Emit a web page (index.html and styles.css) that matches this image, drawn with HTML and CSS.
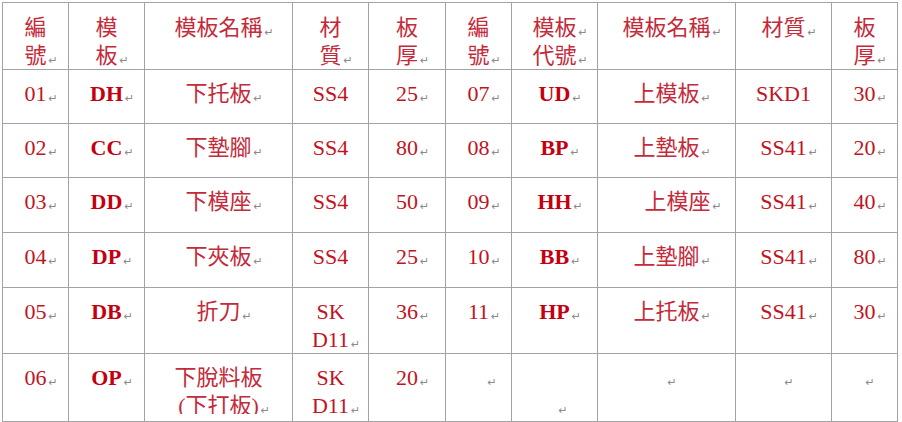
FILE: index.html
```html
<!DOCTYPE html>
<html lang="zh-Hant">
<head>
<meta charset="utf-8">
<title>模板表</title>
<link rel="stylesheet" href="styles.css">
</head>
<body>
<table class="grid">
  <colgroup>
    <col class="k1"><col class="k2"><col class="k3"><col class="k4"><col class="k5">
    <col class="k6"><col class="k7"><col class="k8"><col class="k9"><col class="k10">
  </colgroup>
  <tr class="rh">
    <td><div class="cell zh">編<br>號<span class="m">↵</span></div></td>
    <td><div class="cell zh">模<br>板<span class="m">↵</span></div></td>
    <td><div class="cell zh">模板名稱<span class="m">↵</span></div></td>
    <td><div class="cell zh">材<br>質<span class="m">↵</span></div></td>
    <td><div class="cell zh">板<br>厚<span class="m">↵</span></div></td>
    <td><div class="cell zh">編<br>號<span class="m">↵</span></div></td>
    <td><div class="cell zh">模板<span class="m">↵</span><br>代號<span class="m">↵</span></div></td>
    <td><div class="cell zh">模板名稱<span class="m">↵</span></div></td>
    <td><div class="cell zh">材質<span class="m">↵</span></div></td>
    <td><div class="cell zh">板<br>厚<span class="m">↵</span></div></td>
  </tr>
  <tr class="ra">
    <td><div class="cell">01<span class="m">↵</span></div></td>
    <td><div class="cell b">DH<span class="m">↵</span></div></td>
    <td><div class="cell zh">下托板<span class="m">↵</span></div></td>
    <td><div class="cell">SS4</div></td>
    <td><div class="cell">25<span class="m">↵</span></div></td>
    <td><div class="cell">07<span class="m">↵</span></div></td>
    <td><div class="cell b">UD<span class="m">↵</span></div></td>
    <td><div class="cell zh">上模板<span class="m">↵</span></div></td>
    <td><div class="cell">SKD1</div></td>
    <td><div class="cell">30<span class="m">↵</span></div></td>
  </tr>
  <tr class="ra">
    <td><div class="cell">02<span class="m">↵</span></div></td>
    <td><div class="cell b">CC<span class="m">↵</span></div></td>
    <td><div class="cell zh">下墊腳<span class="m">↵</span></div></td>
    <td><div class="cell">SS4</div></td>
    <td><div class="cell">80<span class="m">↵</span></div></td>
    <td><div class="cell">08<span class="m">↵</span></div></td>
    <td><div class="cell b">BP<span class="m">↵</span></div></td>
    <td><div class="cell zh">上墊板<span class="m">↵</span></div></td>
    <td><div class="cell">SS41<span class="m">↵</span></div></td>
    <td><div class="cell">20<span class="m">↵</span></div></td>
  </tr>
  <tr class="rb">
    <td><div class="cell">03<span class="m">↵</span></div></td>
    <td><div class="cell b">DD<span class="m">↵</span></div></td>
    <td><div class="cell zh">下模座<span class="m">↵</span></div></td>
    <td><div class="cell">SS4</div></td>
    <td><div class="cell">50<span class="m">↵</span></div></td>
    <td><div class="cell">09<span class="m">↵</span></div></td>
    <td><div class="cell b">HH<span class="m">↵</span></div></td>
    <td><div class="cell zh shift">上模座<span class="m">↵</span></div></td>
    <td><div class="cell">SS41<span class="m">↵</span></div></td>
    <td><div class="cell">40<span class="m">↵</span></div></td>
  </tr>
  <tr class="rb">
    <td><div class="cell">04<span class="m">↵</span></div></td>
    <td><div class="cell b">DP<span class="m">↵</span></div></td>
    <td><div class="cell zh">下夾板<span class="m">↵</span></div></td>
    <td><div class="cell">SS4</div></td>
    <td><div class="cell">25<span class="m">↵</span></div></td>
    <td><div class="cell">10<span class="m">↵</span></div></td>
    <td><div class="cell b">BB<span class="m">↵</span></div></td>
    <td><div class="cell zh">上墊腳<span class="m">↵</span></div></td>
    <td><div class="cell">SS41<span class="m">↵</span></div></td>
    <td><div class="cell">80<span class="m">↵</span></div></td>
  </tr>
  <tr class="rc">
    <td><div class="cell">05<span class="m">↵</span></div></td>
    <td><div class="cell b">DB<span class="m">↵</span></div></td>
    <td><div class="cell zh">折刀<span class="m">↵</span></div></td>
    <td><div class="cell">SK<br>D11<span class="m">↵</span></div></td>
    <td><div class="cell">36<span class="m">↵</span></div></td>
    <td><div class="cell">11<span class="m">↵</span></div></td>
    <td><div class="cell b">HP<span class="m">↵</span></div></td>
    <td><div class="cell zh">上托板<span class="m">↵</span></div></td>
    <td><div class="cell">SS41<span class="m">↵</span></div></td>
    <td><div class="cell">30<span class="m">↵</span></div></td>
  </tr>
  <tr class="rd">
    <td><div class="cell">06<span class="m">↵</span></div></td>
    <td><div class="cell b">OP<span class="m">↵</span></div></td>
    <td><div class="cell zh">下脫料板<br>(下打板)<span class="m">↵</span></div></td>
    <td><div class="cell">SK<br>D11<span class="m">↵</span></div></td>
    <td><div class="cell">20<span class="m">↵</span></div></td>
    <td><div class="cell empty e1"><span class="m">↵</span></div></td>
    <td><div class="cell empty e2"><br><span class="m">↵</span></div></td>
    <td><div class="cell empty e3"><span class="m">↵</span></div></td>
    <td><div class="cell empty e3"><span class="m">↵</span></div></td>
    <td><div class="cell empty e3"><span class="m">↵</span></div></td>
  </tr>
</table>
</body>
</html>
```
FILE: styles.css
```css
html, body {
  margin: 0;
  padding: 0;
  background: #ffffff;
  overflow: hidden;
}

body {
  padding: 2px 0 0 2px;
  font-family: "Liberation Serif", "Noto Sans CJK TC", serif;
  font-size: 22px;
  color: #bf1424;
}

.grid {
  border-collapse: collapse;
  table-layout: fixed;
  width: 896px;
}

.grid td {
  border: 1px solid #a3a3a3;
  padding: 0;
  vertical-align: top;
}

.k1 { width: 66px; }
.k2 { width: 76px; }
.k3 { width: 148px; }
.k4 { width: 76px; }
.k5 { width: 77px; }
.k6 { width: 66px; }
.k7 { width: 86px; }
.k8 { width: 138px; }
.k9 { width: 96px; }
.k10 { width: 66px; }

.cell {
  box-sizing: border-box;
  padding-top: 10px;
  line-height: 28px;
  text-align: center;
  overflow: hidden;
  white-space: nowrap;
}

.rh .cell { height: 66px; padding-top: 11px; }
.ra .cell { height: 53px; }
.rb .cell { height: 54px; }
.rc .cell { height: 60px; }
.rd .cell { height: 60px; }
.rc td { height: 65px; }
.rd td { height: 67px; }

.zh {
  color: #c42a3a;
}

.b {
  font-weight: bold;
  color: #c40010;
}

.shift {
  padding-left: 22px;
}

.m {
  display: inline-block;
  width: 12px;
  margin-right: -12px;
  padding-left: 2px;
  box-sizing: border-box;
  font-family: "DejaVu Sans", sans-serif;
  font-size: 11px;
  line-height: 10px;
  color: #8a8a8a;
  font-weight: normal;
  vertical-align: -1px;
  text-align: left;
}

.empty .m { margin-right: 0; }
.e1 { padding-left: 26px; }
.e2 { padding-left: 16px; }
.e3 { padding-left: 10px; }
```
